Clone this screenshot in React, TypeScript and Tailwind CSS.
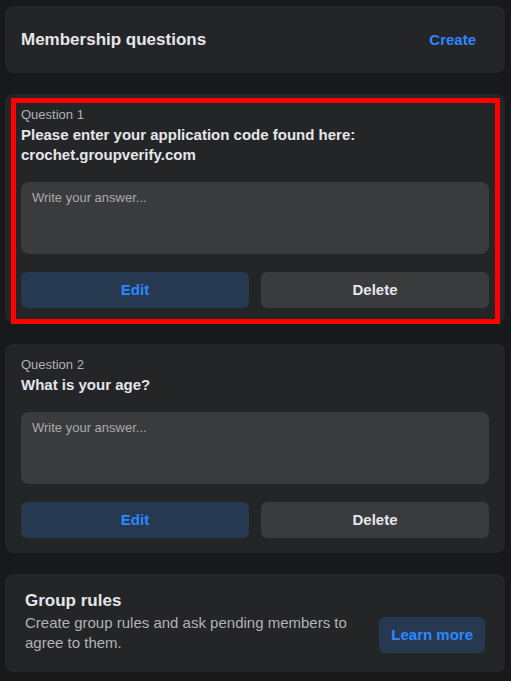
const questions = [
  {
    id: 1,
    text: "Please enter your application code found here: crochet.groupverify.com",
    highlighted: true,
  },
  { id: 2, text: "What is your age?", highlighted: false },
];

function QuestionCard({ index, text, highlighted }: { index: number; text: string; highlighted: boolean }) {
  return (
    <div className="relative bg-[#242526] rounded-lg px-4 pt-3 pb-[15px]">
      <div className="text-[13px] leading-[18px] text-[#b0b3b8]">Question {index}</div>
      <div className="mt-px text-[15px] leading-[20px] font-bold text-[#e4e6eb] pr-[120px]">{text}</div>
      <textarea
        className="mt-[17px] block w-full h-[72px] resize-none rounded-lg bg-[#3a3b3c] px-[11px] py-[8px] text-[13px] leading-[16px] text-[#e4e6eb] placeholder:text-[#a8abaf] outline-none"
        placeholder="Write your answer..."
      />
      <div className="mt-[18px] grid grid-cols-2 gap-3">
        <button type="button" className="h-9 rounded-md bg-[#263951] text-[15px] font-bold text-[#2d88ff]">
          Edit
        </button>
        <button type="button" className="h-9 rounded-md bg-[#3a3b3c] text-[15px] font-bold text-[#e4e6eb]">
          Delete
        </button>
      </div>
      {highlighted && (
        <div className="absolute left-[6px] right-[5px] top-[4px] bottom-[-1px] border-[5px] border-[#ff0000] pointer-events-none" />
      )}
    </div>
  );
}

export default function App() {
  return (
    <div
      className="min-h-[681px] w-full bg-[#18191a] pl-[5px] pr-[6px] pt-[6px] pb-2 flex flex-col gap-[21px]"
      style={{ fontFamily: '"Liberation Sans", Arial, sans-serif' }}
    >
      {/* Header */}
      <div className="h-[67px] bg-[#242526] rounded-lg pl-4 pr-[17px] flex items-center justify-between">
        <h1 className="text-[17px] font-bold text-[#e4e6eb] pt-px">Membership questions</h1>
        <button type="button" className="px-3 py-2 text-[15px] font-bold text-[#2d88ff] pt-[9px]">
          Create
        </button>
      </div>

      {questions.map((q) => (
        <QuestionCard key={q.id} index={q.id} text={q.text} highlighted={q.highlighted} />
      ))}

      {/* Group rules */}
      <div className="bg-[#242526] rounded-lg px-5 pt-[15px] pb-[19px] flex items-end gap-8">
        <div className="flex-1">
          <h2 className="text-[17px] leading-[24px] font-bold text-[#e4e6eb]">Group rules</h2>
          <p className="text-[15px] leading-[20px] text-[#b0b3b8]">
            Create group rules and ask pending members to agree to them.
          </p>
        </div>
        <button type="button" className="h-9 px-3 rounded-md bg-[#263951] text-[15px] font-bold text-[#2d88ff] shrink-0">
          Learn more
        </button>
      </div>
    </div>
  );
}
